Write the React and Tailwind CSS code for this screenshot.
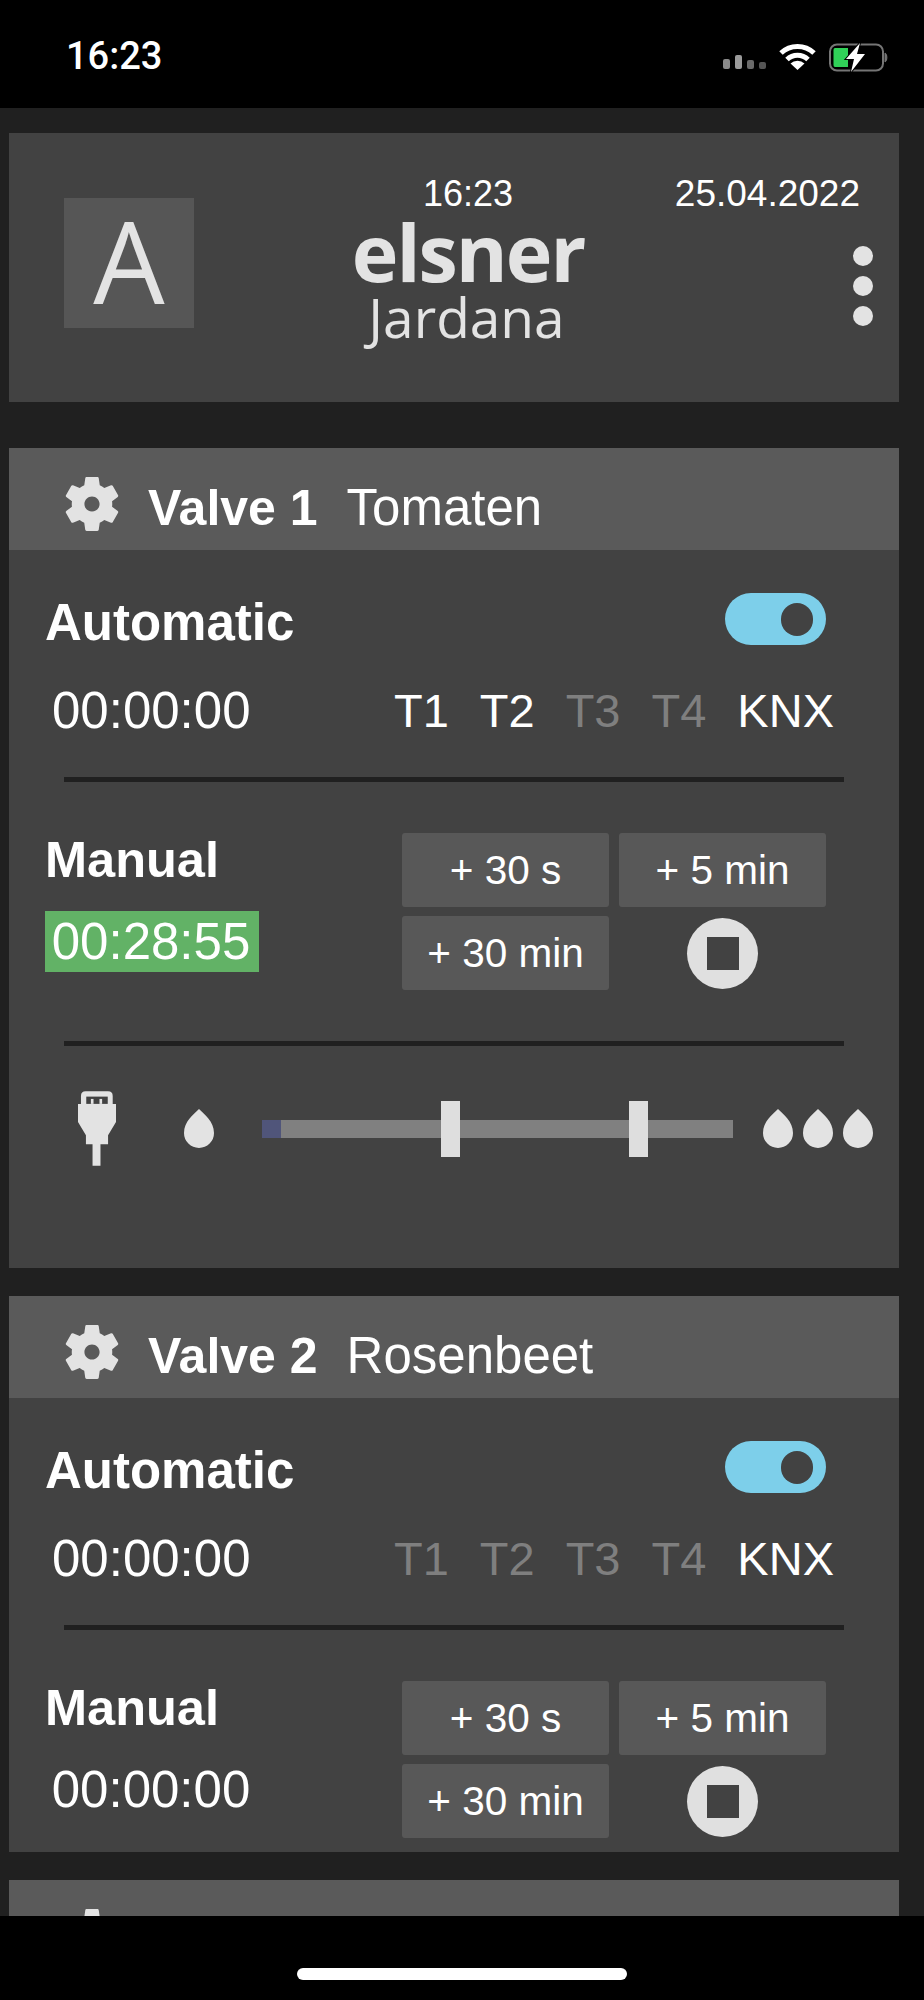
const sans = "font-['Liberation_Sans',Arial,sans-serif]"
const logoFont = "font-['Open_Sans','Noto_Sans',sans-serif]"

function SignalBars() {
  return (
    <div className="flex items-end gap-[5px] h-[14px]">
      <span className="w-[7px] h-[10px] rounded-[2px] bg-[#8a8a8a]" />
      <span className="w-[7px] h-[14px] rounded-[2px] bg-[#9a9a9a]" />
      <span className="w-[7px] h-[9px] rounded-[2px] bg-[#6a6a6a]" />
      <span className="w-[7px] h-[7px] rounded-[2px] bg-[#555555]" />
    </div>
  )
}

function WifiIcon() {
  return (
    <svg width="37" height="27" viewBox="0 0 37 27" fill="none">
      <path d="M2 10 A24 24 0 0 1 35 10" stroke="#fff" strokeWidth="5" />
      <path d="M8 16.5 A15 15 0 0 1 29 16.5" stroke="#fff" strokeWidth="5" />
      <path d="M18.5 27 L11.5 20.5 A10 10 0 0 1 25.5 20.5 Z" fill="#fff" />
    </svg>
  )
}

function BatteryIcon() {
  return (
    <svg width="60" height="29" viewBox="0 0 60 29" fill="none">
      <rect x="1" y="1.5" width="53" height="26" rx="7" stroke="#757575" strokeWidth="2" />
      <path d="M56 10 C58.5 11 58.5 18 56 19 Z" fill="#757575" stroke="#757575" />
      <path d="M6 5 H19 V24 H6 Q4.5 24 4.5 22 V7 Q4.5 5 6 5 Z" fill="#30d158" />
      <path d="M31 0 L17 16 H25 L22 29 L36 11 H28 Z" fill="#fff" stroke="#000" strokeWidth="2" paintOrder="stroke" />
    </svg>
  )
}

function GearIcon() {
  return (
    <svg width="54" height="54" viewBox="2.4 2.4 19.2 19.2" fill="#e3e3e3" fillRule="evenodd" className="shrink-0">
      <path d="M19.14,12.94c0.04-0.3,0.06-0.61,0.06-0.94c0-0.32-0.02-0.64-0.07-0.94l2.03-1.58c0.18-0.14,0.23-0.41,0.12-0.61l-1.92-3.32c-0.12-0.22-0.37-0.29-0.59-0.22l-2.39,0.96c-0.5-0.38-1.03-0.7-1.62-0.94L14.4,2.81c-0.04-0.24-0.24-0.41-0.48-0.41h-3.84c-0.24,0-0.43,0.17-0.47,0.41L9.25,5.35C8.66,5.59,8.12,5.92,7.63,6.29L5.24,5.33c-0.22-0.08-0.47,0-0.59,0.22L2.74,8.87C2.62,9.08,2.66,9.34,2.86,9.48l2.03,1.58C4.84,11.36,4.8,11.69,4.8,12s0.02,0.64,0.07,0.94l-2.03,1.58c-0.18,0.14-0.23,0.41-0.12,0.61l1.92,3.32c0.12,0.22,0.37,0.29,0.59,0.22l2.39-0.96c0.5,0.38,1.03,0.7,1.62,0.94l0.36,2.54c0.05,0.24,0.24,0.41,0.48,0.41h3.84c0.24,0,0.44-0.17,0.47-0.41l0.36-2.54c0.59-0.24,1.13-0.56,1.62-0.94l2.39,0.96c0.22,0.08,0.47,0,0.59-0.22l1.92-3.32c0.12-0.22,0.07-0.47-0.12-0.61L19.14,12.94z M12,14.7c-1.49,0-2.7-1.21-2.7-2.7s1.21-2.7,2.7-2.7s2.7,1.21,2.7,2.7S13.49,14.7,12,14.7z" />
    </svg>
  )
}

function PlugIcon() {
  return (
    <svg width="38" height="75" viewBox="0 0 115 225" className="shrink-0">
      <path d="M9 38 V14 Q9 0 23 0 H91 Q105 0 105 14 V38 H115 V93 L91 133 V160 H68 V225 H44 V160 H24 V133 L0 93 V38 Z" fill="#e3e3e3" />
      <rect x="25" y="16" width="65" height="22" fill="#424242" />
      <rect x="39" y="23" width="8" height="15" fill="#e3e3e3" />
      <rect x="65" y="23" width="8" height="15" fill="#e3e3e3" />
    </svg>
  )
}

function Drop() {
  return (
    <svg width="30" height="39" viewBox="0 0 30 39" fill="#e3e3e3" className="shrink-0">
      <path d="M15 0 C20 5 30 12 30 24 A15 15 0 0 1 0 24 C0 12 10 5 15 0 Z" />
    </svg>
  )
}

function Divider() {
  return <div className="mx-[55px] h-[5px] bg-[#202020]" />
}

function TimeButton({ children }) {
  return (
    <button type="button" className="h-[74px] rounded-[3px] bg-[#585858] text-[40.5px] leading-none text-white flex items-center justify-center">
      {children}
    </button>
  )
}

function Channel({ on, children }) {
  return <span className={on ? 'text-white' : 'text-[#7f7f7f]'}>{children}</span>
}

function CardHeader({ title, name }) {
  return (
    <header className="h-[102px] bg-[#5a5a5a] flex items-start pl-[56px] pt-[29px]">
      <GearIcon />
      {title && <span className="ml-[29px] mt-[-7px] text-[50px] leading-[76px] font-bold text-white">{title}</span>}
      {name && <span className="ml-[29px] mt-[-7px] text-[51px] leading-[76px] text-white">{name}</span>}
    </header>
  )
}

function ValveCard({ title, name, active, manualTime, running, slider }) {
  return (
    <section className="bg-[#424242]">
      <CardHeader title={title} name={name} />

      {/* Automatic */}
      <div className="mt-[43px] flex items-start justify-between pl-[36px] pr-[73px] h-[56px]">
        <span className="text-[51px] leading-[52px] pt-[4px] font-bold text-white">Automatic</span>
        <div className="w-[101px] h-[52px] rounded-full bg-[#7dcfea] flex items-center justify-end pr-[13px]">
          <span className="w-[32px] h-[33px] rounded-full bg-[#424242]" />
        </div>
      </div>
      <div className="mt-[33px] flex items-baseline pl-[43px] pr-[65px] h-[58px]">
        <span className="text-[51px] leading-[58px] text-white">00:00:00</span>
        <div className="ml-auto flex gap-[31px] text-[47px] leading-[58px] -translate-y-[1px]">
          <Channel on={active[0]}>T1</Channel>
          <Channel on={active[1]}>T2</Channel>
          <Channel on={active[2]}>T3</Channel>
          <Channel on={active[3]}>T4</Channel>
          <Channel on>KNX</Channel>
        </div>
      </div>
      <div className="mt-[37px]">
        <Divider />
      </div>

      {/* Manual */}
      <div className={`mt-[51px] flex items-start pl-[36px] pr-[73px] ${slider ? 'pb-[51px]' : 'pb-[14px]'}`}>
        <div className="w-[214px]">
          <div className="text-[50.5px] leading-[52px] mt-[1px] font-bold text-white">Manual</div>
          <div className={`mt-[25px] h-[61px] pr-[2px] text-[51px] leading-[61px] text-center text-white ${running ? 'bg-[#62b266]' : ''}`}>
            {manualTime}
          </div>
        </div>
        <div className="ml-auto w-[424px] grid grid-cols-[207px_207px] gap-x-[10px] gap-y-[9px]">
          <TimeButton>+ 30 s</TimeButton>
          <TimeButton>+ 5 min</TimeButton>
          <TimeButton>+ 30 min</TimeButton>
          <div className="flex items-center justify-center">
            <div className="w-[71px] h-[71px] rounded-full bg-[#e0e0e0] flex items-center justify-center">
              <span className="w-[32px] h-[33px] bg-[#424242]" />
            </div>
          </div>
        </div>
      </div>

      {slider && (
        <>
          <Divider />
          <div className="mt-[45px] pb-[102px] pl-[69px] pr-[26px] flex items-center">
            <PlugIcon />
            <div className="ml-[68px]">
              <Drop />
            </div>
            <div className="relative ml-[48px] w-[471px] h-[18px] bg-[#808080]">
              <span className="absolute left-0 top-0 w-[19px] h-[18px] bg-[#50557a]" />
              <span className="absolute left-[179px] top-[-19px] w-[19px] h-[56px] bg-[#dedede]" />
              <span className="absolute left-[367px] top-[-19px] w-[19px] h-[56px] bg-[#dedede]" />
            </div>
            <div className="ml-auto flex gap-[10px]">
              <Drop />
              <Drop />
              <Drop />
            </div>
          </div>
        </>
      )}
    </section>
  )
}

export default function App() {
  return (
    <div className={`${sans} w-[924px] h-[2000px] flex flex-col bg-black overflow-hidden`}>
      {/* iOS status bar */}
      <div className="h-[108px] shrink-0 flex items-start pl-[66px] pr-[35px]">
        <span className="mt-[35px] font-['Roboto',sans-serif] text-[38px] leading-[42px] font-medium text-white">16:23</span>
        <div className="ml-auto mt-[43px] flex items-start">
          <div className="mt-[12px]">
            <SignalBars />
          </div>
          <div className="ml-[13px]">
            <WifiIcon />
          </div>
          <div className="ml-[13px]">
            <BatteryIcon />
          </div>
        </div>
      </div>

      <main className="h-[1808px] shrink-0 overflow-hidden bg-[#202020] pl-[9px] pr-[25px] pt-[25px]">
        {/* App header */}
        <div className="h-[269px] bg-[#424242] flex items-start pl-[55px] pr-[26px]">
          <div className={`${logoFont} mt-[65px] w-[130px] h-[130px] shrink-0 bg-[#565656] flex items-center justify-center pb-[6px] text-[113px] leading-none text-[#e3e3e3]`}>
            A
          </div>
          <div className="ml-[124px] w-[300px] shrink-0 flex flex-col items-center">
            <span className="mt-[41px] text-[36px] leading-[40px] text-white">16:23</span>
            <span className={`${logoFont} mt-[8px] text-[79px] leading-[60px] font-bold tracking-[-2px] text-[#e3e3e3]`}>elsner</span>
            <span className={`${logoFont} mt-[5px] -ml-[3px] text-[55px] leading-[60px] text-[#e3e3e3]`}>Jardana</span>
          </div>
          <div className="flex-1 flex flex-col items-end">
            <span className="mt-[41px] mr-[13px] text-[37px] leading-[40px] text-white whitespace-nowrap">25.04.2022</span>
            <div className="mt-[32px] flex flex-col gap-[10px]">
              <span className="w-[20px] h-[20px] rounded-full bg-[#e3e3e3]" />
              <span className="w-[20px] h-[20px] rounded-full bg-[#e3e3e3]" />
              <span className="w-[20px] h-[20px] rounded-full bg-[#e3e3e3]" />
            </div>
          </div>
        </div>

        <div className="mt-[46px] flex flex-col gap-[28px]">
          <ValveCard title="Valve 1" name="Tomaten" active={[true, true, false, false]} manualTime="00:28:55" running slider />
          <ValveCard title="Valve 2" name="Rosenbeet" active={[false, false, false, false]} manualTime="00:00:00" />
          {/* third card is cut off by the home bar, only the gear tip shows */}
          <section className="bg-[#424242]">
            <CardHeader />
          </section>
        </div>
      </main>

      {/* Home indicator */}
      <div className="flex-1 flex justify-center pt-[52px]">
        <span className="w-[330px] h-[12px] rounded-full bg-white" />
      </div>
    </div>
  )
}
